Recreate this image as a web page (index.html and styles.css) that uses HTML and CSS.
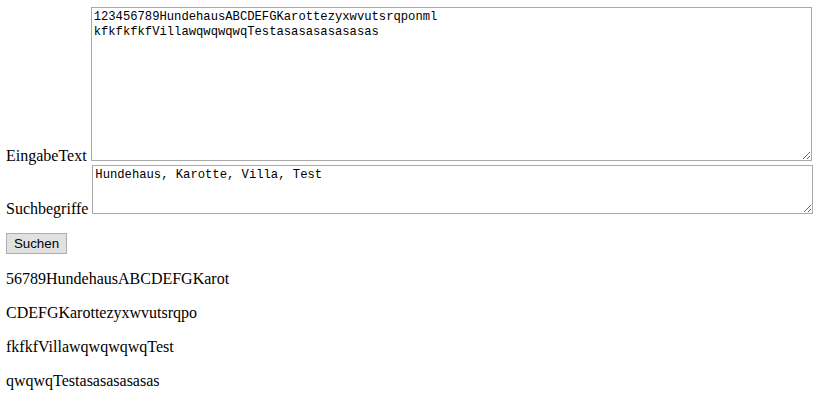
FILE: index.html
```html
<!DOCTYPE html>
<html lang="de">
<head>
<meta charset="utf-8">
<title>Suche</title>
<link rel="stylesheet" href="styles.css">
</head>
<body>
<form class="search-form">
<div class="row"><label for="eingabe">EingabeText</label> <textarea id="eingabe" class="input-text" spellcheck="false">123456789HundehausABCDEFGKarottezyxwvutsrqponml
kfkfkfkfVillawqwqwqwqTestasasasasasasas</textarea></div>
<div class="row"><label for="begriffe">Suchbegriffe</label> <textarea id="begriffe" class="input-terms" spellcheck="false">Hundehaus, Karotte, Villa, Test</textarea></div>
<div class="actions"><button type="button" class="btn">Suchen</button></div>
</form>
<div class="results">
<p>56789HundehausABCDEFGKarot</p>
<p>CDEFGKarottezyxwvutsrqpo</p>
<p>fkfkfVillawqwqwqwqTest</p>
<p>qwqwqTestasasasasasas</p>
</div>
</body>
</html>
```
FILE: styles.css
```css
html, body {
  background: #ffffff;
}
body {
  margin: 7px 6px;
  font-family: "Liberation Serif", "Times New Roman", serif;
  font-size: 16px;
  color: #000000;
}
.search-form {
  margin: 0;
}
.row {
  display: block;
}
textarea {
  box-sizing: border-box;
  width: 721px;
  margin: 0;
  padding: 2px;
  border: 1px solid #a9a9a9;
  font-family: "Liberation Mono", "DejaVu Sans Mono", monospace;
  font-size: 12.2px;
  line-height: 15px;
  color: #000000;
  background: #ffffff;
  vertical-align: baseline;
  resize: both;
}
.input-text {
  height: 154px;
}
.input-terms {
  height: 49px;
}
.actions {
  margin-top: 15px;
}
.btn {
  box-sizing: border-box;
  width: 61px;
  height: 21px;
  margin: 0;
  padding: 0 6px;
  border: 1px solid #adadad;
  border-radius: 0;
  background: #e1e1e1;
  font-family: "Liberation Sans", Arial, sans-serif;
  font-size: 13.33px;
  color: #000000;
  display: block;
}
.results p {
  margin: 16px 0;
}
```
